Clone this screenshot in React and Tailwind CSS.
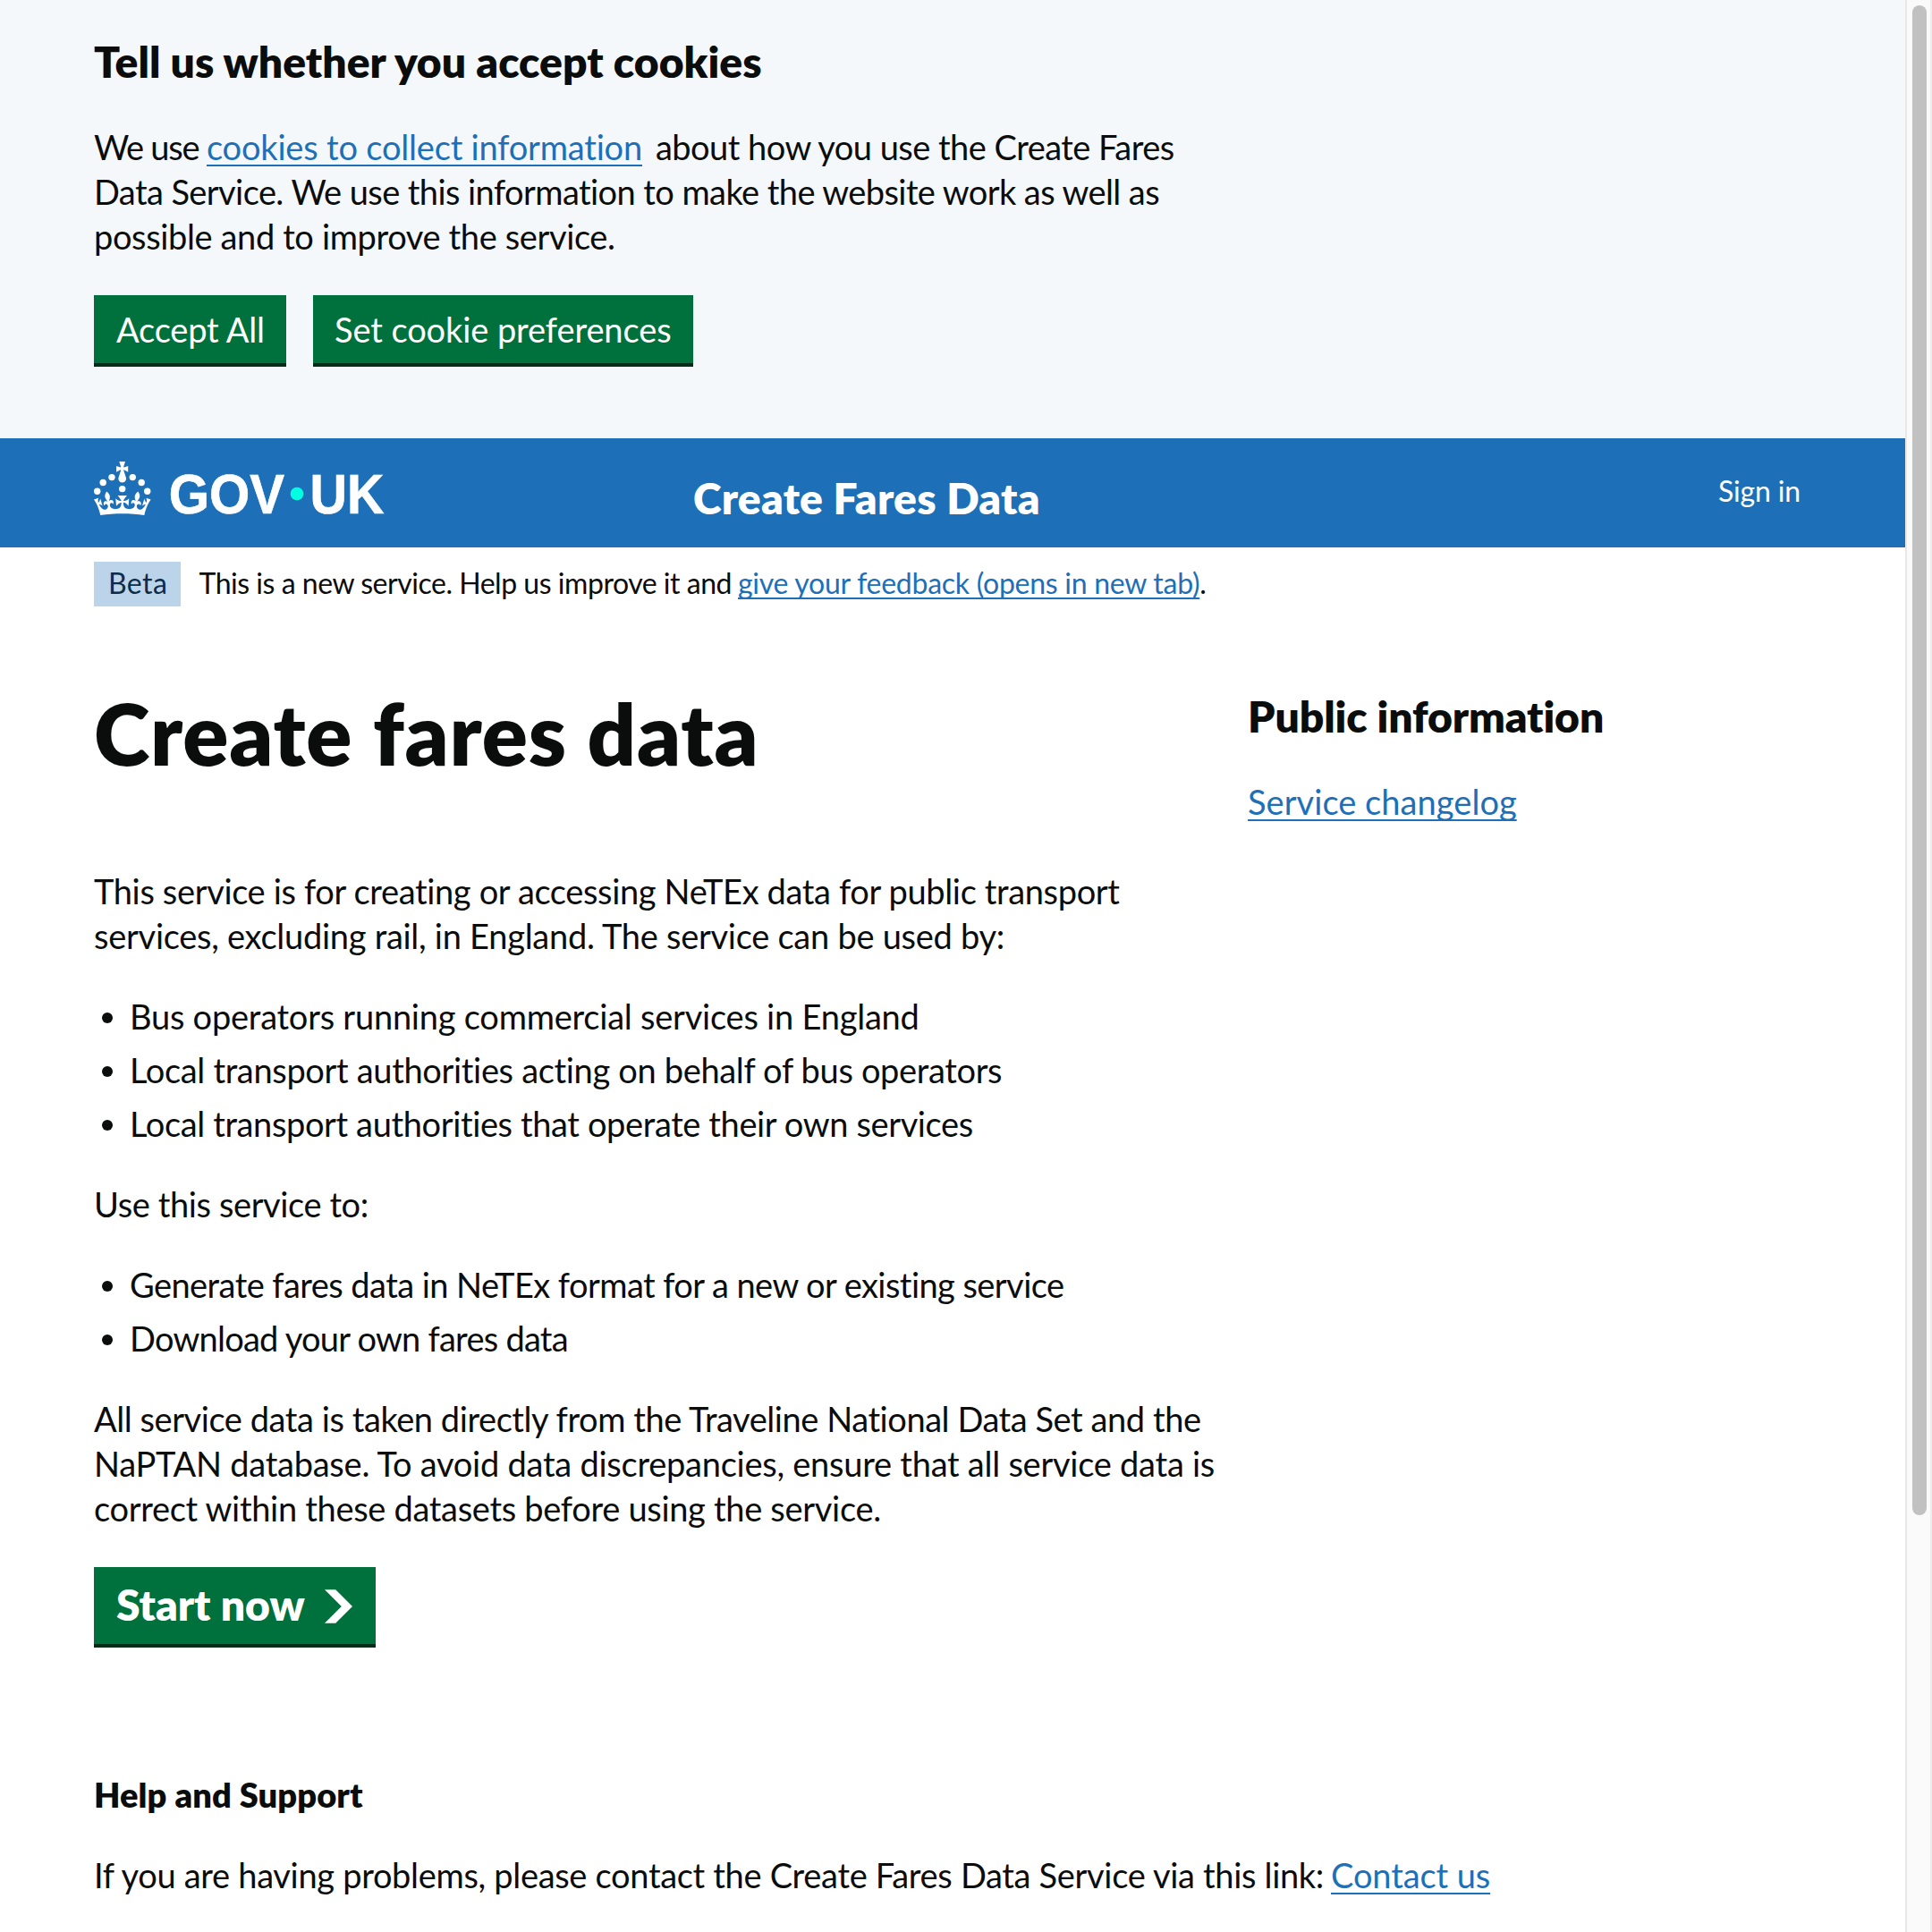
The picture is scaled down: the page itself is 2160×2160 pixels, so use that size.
import React from "react";

const link =
  "text-[#1d70b8] underline decoration-2 underline-offset-[5px] [text-decoration-skip-ink:none]";

function Line({ className = "", children }) {
  return <span className={`block ${className}`}>{children}</span>;
}

function CookieBanner() {
  return (
    <section className="h-[490px] bg-[#f4f8fb] pl-[105px] pt-[39px]">
      <h2 className="text-[48px] leading-[60px] font-extrabold tracking-[0.03px]">
        Tell us whether you accept cookies
      </h2>
      <p className="mt-10">
        <Line className="flex">
          <span className="w-[126px] tracking-[-1.21px]">We use</span>
          <a className={`w-[487px] tracking-[-0.19px] ${link}`}>cookies to collect information</a>
          <span className="ml-[15px] tracking-[-0.53px]">about how you use the Create Fares</span>
        </Line>
        <Line className="tracking-[-0.575px]">
          Data Service. We use this information to make the website work as well as
        </Line>
        <Line className="tracking-[-0.37px]">possible and to improve the service.</Line>
      </p>
      <div className="mt-[41px] flex gap-[30px] text-white">
        <button className="h-[76px] w-[215px] bg-[#00703c] pb-[13px] pl-[25px] pt-[13px] text-left tracking-[-0.18px] shadow-[0_4px_0_#002d18]">
          Accept All
        </button>
        <button className="h-[76px] w-[425px] bg-[#00703c] pb-[13px] pl-[24px] pt-[13px] text-left tracking-[-0.09px] shadow-[0_4px_0_#002d18]">
          Set cookie preferences
        </button>
      </div>
    </section>
  );
}

function Logo() {
  return (
    <svg viewBox="0 0 324 60" width="324" height="60" fill="#fff" className="mt-[26px] shrink-0 overflow-visible">
      <circle cx="20" cy="17.6" r="3.7" />
      <circle cx="10.2" cy="23.5" r="3.7" />
      <circle cx="3.7" cy="33.2" r="3.7" />
      <circle cx="31.7" cy="30.6" r="3.7" />
      <circle cx="43.3" cy="17.6" r="3.7" />
      <circle cx="53.2" cy="23.5" r="3.7" />
      <circle cx="59.7" cy="33.2" r="3.7" />
      <path d="M33.1,9.8c.2-.1.3-.3.5-.5l4.6,2.4v-6.8l-4.6,1.5c-.1-.2-.3-.3-.5-.5l1.9-5.9h-6.7l1.9,5.9c-.2.1-.3.3-.5.5l-4.6-1.5v6.8l4.6-2.4c.1.2.3.3.5.5l-2.6,8c-.9,2.8,1.2,5.7,4.1,5.7h0c3,0,5.1-2.9,4.1-5.7l-2.6-8ZM37,37.9s-3.4,3.8-4.1,6.1c2.2,0,4.2-.5,6.4-2.8l-.7,8.5c-2-2.8-4.4-4.1-5.7-3.8.1,3.1.5,6.7,5.8,7.2,3.7.3,6.7-1.5,7-3.8.4-2.6-2-4.3-3.7-1.6-1.4-4.5,2.4-6.1,4.9-3.2-1.9-4.5-1.8-7.7,2.4-10.9,3,4,2.6,7.3-1.2,11.1,2.4-1.3,6.2,0,4,4.6-1.2-2.8-3.7-2.2-4.2.2-.3,1.7.7,3.7,3,4.2,1.9.3,4.7-.9,7-5.9-1.3,0-2.4.7-3.9,1.7l2.4-8c.6,2.3,1.4,3.7,2.2,4.5.6-1.6.5-2.8,0-5.3l5,1.8c-2.6,3.6-5.2,8.7-7.3,17.5-7.4-1.1-15.7-1.7-24.5-1.7h0c-8.8,0-17.1.6-24.5,1.7-2.1-8.9-4.7-13.9-7.3-17.5l5-1.8c-.5,2.5-.6,3.7,0,5.3.8-.8,1.6-2.3,2.2-4.5l2.4,8c-1.5-1-2.6-1.7-3.9-1.7,2.3,5,5.2,6.2,7,5.9,2.3-.4,3.3-2.4,3-4.2-.5-2.4-3-3.1-4.2-.2-2.2-4.6,1.6-6,4-4.6-3.7-3.7-4.2-7.1-1.2-11.1,4.2,3.2,4.3,6.4,2.4,10.9,2.5-2.8,6.3-1.3,4.9,3.2-1.8-2.7-4.1-1-3.7,1.6.3,2.3,3.3,4.1,7,3.8,5.4-.5,5.7-4.2,5.8-7.2-1.3-.2-3.7,1-5.7,3.8l-.7-8.5c2.2,2.3,4.2,2.7,6.4,2.8-.7-2.3-4.1-6.1-4.1-6.1h10.6Z" />
      <g
        stroke="#fff"
        strokeWidth="0.7"
        className="text-[63px] font-bold [font-family:'Liberation_Sans',sans-serif]"
      >
        <text x="83.8" y="57.6" textLength="129.2" lengthAdjust="spacingAndGlyphs">GOV</text>
        <text x="241.5" y="57.6" textLength="82.8" lengthAdjust="spacingAndGlyphs">UK</text>
      </g>
      <circle cx="227" cy="36" r="7.3" fill="#00ffe0" />
    </svg>
  );
}

function Header() {
  return (
    <header className="flex h-[122px] bg-[#1d70b8] pl-[105px] text-white">
      <Logo />
      <span className="ml-[346px] mt-[37px] w-[1146px] text-[48px] leading-[60px] font-extrabold tracking-[0.24px]">
        Create Fares Data
      </span>
      <a className="mt-[39px] text-[32px] leading-[40px] tracking-[-0.17px]">Sign in</a>
    </header>
  );
}

function PhaseBanner() {
  return (
    <div className="mt-4 flex h-[50px] pl-[105px] text-[32px] leading-[47px]">
      <strong className="w-[97px] bg-[#bbd4ea] pl-4 font-normal tracking-[0.42px] text-[#0c2d4a]">Beta</strong>
      <span className="ml-[20.5px] w-[602.5px] tracking-[-0.47px]">
        This is a new service. Help us improve it and
      </span>
      <a className="text-[#1d70b8] underline decoration-2 underline-offset-[4px] tracking-[-0.27px] [text-decoration-skip-ink:none]">
        give your feedback (opens in new tab)
      </a>
      <span>.</span>
    </div>
  );
}

function Bullet({ className, children }) {
  return (
    <li className="flex h-[50px] items-center">
      <span className="ml-[9px] mr-[19px] mt-[4px] size-3 shrink-0 rounded-full bg-[#0b0c0c]" />
      <span className={className}>{children}</span>
    </li>
  );
}

export default function App() {
  return (
    <div className="flex h-[2160px] w-[2160px] overflow-hidden whitespace-nowrap bg-white text-[38px] leading-[50px] text-[#0b0c0c] [font-family:Lato,sans-serif]">
      <div className="w-[2130px] shrink-0">
        <CookieBanner />
        <Header />
        <PhaseBanner />
        <main className="pl-[105px] pt-[89px]">
          <div className="flex">
            <div className="w-[1290px] pt-[2px]">
              <h1 className="text-[95px] leading-[100px] font-extrabold tracking-[0.8px]">Create fares data</h1>
              <p className="mt-[102px]">
                <Line className="tracking-[-0.355px]">
                  This service is for creating or accessing NeTEx data for public transport
                </Line>
                <Line className="tracking-[-0.27px]">
                  services, excluding rail, in England. The service can be used by:
                </Line>
              </p>
              <ul className="mt-10 flex flex-col gap-[10px]">
                <Bullet className="tracking-[-0.23px]">Bus operators running commercial services in England</Bullet>
                <Bullet className="tracking-[-0.335px]">
                  Local transport authorities acting on behalf of bus operators
                </Bullet>
                <Bullet className="tracking-[-0.375px]">
                  Local transport authorities that operate their own services
                </Bullet>
              </ul>
              <p className="mt-10 tracking-[-0.39px]">Use this service to:</p>
              <ul className="mt-10 flex flex-col gap-[10px]">
                <Bullet className="tracking-[-0.56px]">
                  Generate fares data in NeTEx format for a new or existing service
                </Bullet>
                <Bullet className="tracking-[-0.75px]">Download your own fares data</Bullet>
              </ul>
              <p className="mt-10">
                <Line className="tracking-[-0.435px]">
                  All service data is taken directly from the Traveline National Data Set and the
                </Line>
                <Line className="tracking-[-0.25px]">
                  NaPTAN database. To avoid data discrepancies, ensure that all service data is
                </Line>
                <Line className="tracking-[-0.31px]">correct within these datasets before using the service.</Line>
              </p>
              <a className="mt-[41px] flex h-[86px] w-[315px] items-start bg-[#00703c] pl-[25px] pt-3 text-[48px] leading-[60px] font-extrabold text-white shadow-[0_4px_0_#002d18]">
                <span className="w-[233px]">Start now</span>
                <svg viewBox="0 0 33 40" width="31" height="38" className="mt-[13px]" fill="#fff">
                  <path d="M0 0h13l20 20-20 20H0l20-20z" />
                </svg>
              </a>
            </div>
            <aside className="pt-[4px]">
              <h2 className="text-[48px] leading-[60px] font-extrabold tracking-[-0.1px]">Public information</h2>
              <a className={`mt-10 block tracking-[0.05px] ${link}`}>Service changelog</a>
            </aside>
          </div>
          <h3 className="mt-[143px] font-extrabold tracking-[0.09px]">Help and Support</h3>
          <p className="mt-10 flex">
            <span className="w-[1383px] tracking-[-0.315px]">
              If you are having problems, please contact the Create Fares Data Service via this link:
            </span>
            <a className={`tracking-[-0.1px] ${link}`}>Contact us</a>
          </p>
        </main>
      </div>
      <div className="w-[30px] shrink-0 border-l-2 border-r-2 border-l-[#e8e8e8] border-r-[#ededed] bg-[#fafafa] pl-[6px] pt-[6px]">
        <div className="h-[1688px] w-4 rounded-full bg-[#c1c1c1]" />
      </div>
    </div>
  );
}
